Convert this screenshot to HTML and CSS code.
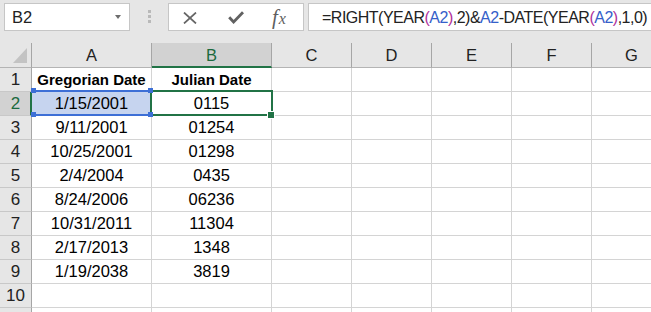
FILE: index.html
```html
<!DOCTYPE html>
<html>
<head>
<meta charset="utf-8">
<link rel="stylesheet" href="styles.css">
</head>
<body>
<div class="app">
  <div class="toolbar">
    <div class="namebox"><span class="name">B2</span><span class="caret"></span></div>
    <div class="grip"><i></i><i></i><i></i></div>
    <div class="fbtns">
      <svg class="ic-x" width="14" height="12" viewBox="0 0 14 12"><path d="M1 0.5 L13 11.5 M13 0.5 L1 11.5" stroke="#666" stroke-width="1.7" fill="none"/></svg>
      <svg class="ic-check" width="16" height="13" viewBox="0 0 16 13"><path d="M1.2 6.2 L5.6 11 L15 1.3" stroke="#616161" stroke-width="2.8" fill="none"/></svg>
      <span class="fx"><span class="fx-f">f</span><span class="fx-x">x</span></span>
    </div>
    <div class="formula">=RIGHT(YEAR<span class="p">(</span><span class="r">A2</span><span class="p">)</span>,2)&amp;<span class="r">A2</span>-DATE(YEAR<span class="p">(</span><span class="r">A2</span><span class="p">)</span>,1,0)</div>
  </div>
  <div class="sheet">
    <div class="grid">
      <div class="c corner"><svg width="31" height="24" viewBox="0 0 31 24"><polygon points="13,20 27,20 27,5" fill="#c3c3c3"/></svg></div>
      <div class="c ch">A</div><div class="c ch sel">B</div><div class="c ch">C</div><div class="c ch">D</div><div class="c ch">E</div><div class="c ch">F</div><div class="c ch">G</div>

      <div class="c rh">1</div><div class="c b">Gregorian Date</div><div class="c b">Julian Date</div><div class="c"></div><div class="c"></div><div class="c"></div><div class="c"></div><div class="c"></div>
      <div class="c rh sel">2</div><div class="c fill">1/15/2001</div><div class="c">0115</div><div class="c"></div><div class="c"></div><div class="c"></div><div class="c"></div><div class="c"></div>
      <div class="c rh">3</div><div class="c">9/11/2001</div><div class="c">01254</div><div class="c"></div><div class="c"></div><div class="c"></div><div class="c"></div><div class="c"></div>
      <div class="c rh">4</div><div class="c">10/25/2001</div><div class="c">01298</div><div class="c"></div><div class="c"></div><div class="c"></div><div class="c"></div><div class="c"></div>
      <div class="c rh">5</div><div class="c">2/4/2004</div><div class="c">0435</div><div class="c"></div><div class="c"></div><div class="c"></div><div class="c"></div><div class="c"></div>
      <div class="c rh">6</div><div class="c">8/24/2006</div><div class="c">06236</div><div class="c"></div><div class="c"></div><div class="c"></div><div class="c"></div><div class="c"></div>
      <div class="c rh">7</div><div class="c">10/31/2011</div><div class="c">11304</div><div class="c"></div><div class="c"></div><div class="c"></div><div class="c"></div><div class="c"></div>
      <div class="c rh">8</div><div class="c">2/17/2013</div><div class="c">1348</div><div class="c"></div><div class="c"></div><div class="c"></div><div class="c"></div><div class="c"></div>
      <div class="c rh">9</div><div class="c">1/19/2038</div><div class="c">3819</div><div class="c"></div><div class="c"></div><div class="c"></div><div class="c"></div><div class="c"></div>
      <div class="c rh">10</div><div class="c"></div><div class="c"></div><div class="c"></div><div class="c"></div><div class="c"></div><div class="c"></div><div class="c"></div>
      <div class="c rh"></div><div class="c"></div><div class="c"></div><div class="c"></div><div class="c"></div><div class="c"></div><div class="c"></div><div class="c"></div>
    </div>
    <div class="active-box"><span class="handle"></span></div>
    <div class="ref-box"><i class="sq tl"></i><i class="sq tr"></i><i class="sq bl"></i><i class="sq br"></i></div>
  </div>
</div>
</body>
</html>
```

FILE: styles.css
```css
html, body {
  margin: 0;
  padding: 0;
  background: #ffffff;
  overflow: hidden;
}
body {
  font-family: "Liberation Sans", Arial, sans-serif;
  color: #000;
}
.app {
  width: 651px;
  height: 312px;
  overflow: hidden;
}
.toolbar {
  display: flex;
  align-items: flex-start;
  height: 43px;
  box-sizing: border-box;
  padding: 3px 0 0 4px;
  background: #e6e6e6;
}
.namebox {
  width: 126px;
  height: 28px;
  box-sizing: border-box;
  border: 1px solid #c6c6c6;
  background: #fff;
  display: flex;
  align-items: center;
  padding-left: 7px;
}
.name {
  flex: 1;
  font-size: 16.5px;
  color: #222;
}
.caret {
  width: 0;
  height: 0;
  border-left: 3.5px solid transparent;
  border-right: 3.5px solid transparent;
  border-top: 4px solid #6d6d6d;
  margin-right: 8px;
}
.grip {
  width: 38px;
  display: flex;
  flex-direction: column;
  align-items: center;
  gap: 2px;
  padding-top: 7px;
}
.grip i {
  display: block;
  width: 3px;
  height: 3px;
  background: #b9b9b9;
}
.fbtns {
  width: 136px;
  height: 28px;
  box-sizing: border-box;
  border: 1px solid #c6c6c6;
  background: #fff;
  display: flex;
  align-items: center;
}
.ic-x { margin-left: 14px; margin-top: 1px; }
.ic-check { margin-left: 31px; margin-top: 1px; }
.fx {
  margin-left: 28px;
  font-family: "Liberation Serif", "Times New Roman", serif;
  font-style: italic;
  color: #5f5f5f;
  line-height: 1;
}
.fx-f { font-size: 21px; }
.fx-x { font-size: 16px; margin-left: 1px; }
.formula {
  flex: 1;
  margin-left: 4px;
  height: 28px;
  box-sizing: border-box;
  border: 1px solid #c6c6c6;
  border-right: none;
  background: #fff;
  padding-left: 13px;
  font-size: 16px;
  line-height: 27px;
  letter-spacing: -0.5px;
  white-space: nowrap;
  overflow: hidden;
  color: #222;
}
.formula .r { color: #3560c9; }
.formula .p { color: #b0319a; }

.sheet {
  position: relative;
  height: 269px;
  overflow: hidden;
}
.grid {
  display: grid;
  grid-template-columns: 32px 120px 120px repeat(5, 80px);
  grid-template-rows: 25px;
  grid-auto-rows: 24px;
  width: max-content;
}
.c {
  box-sizing: border-box;
  border-right: 1px solid #d4d4d4;
  border-bottom: 1px solid #d4d4d4;
  text-align: center;
  font-size: 16.5px;
  line-height: 23px;
  white-space: nowrap;
  overflow: hidden;
  color: #000;
}
.b {
  font-weight: bold;
  font-size: 15px;
}
.fill { background: #c6d4ef; }
.corner {
  background: #e6e6e6;
  border-right-color: #a6a6a6;
  border-bottom-color: #b4b4b4;
}
.corner svg { display: block; }
.ch {
  background: #e6e6e6;
  border-right-color: #a6a6a6;
  border-bottom-color: #b4b4b4;
  line-height: 25px;
  font-size: 16.5px;
  color: #222;
}
.ch.sel {
  background: #d2d2d2;
  border-bottom: 2px solid #217346;
  color: #1b6a3e;
  line-height: 24px;
}
.rh {
  background: #e6e6e6;
  border-right-color: #a6a6a6;
  border-bottom-color: #c8c8c8;
  font-size: 17px;
  color: #222;
}
.rh.sel {
  background: #d2d2d2;
  border-right: 2px solid #217346;
  color: #1b6a3e;
  padding-left: 1px;
}
.active-box {
  position: absolute;
  left: 150px;
  top: 47px;
  width: 123px;
  height: 26px;
  box-sizing: border-box;
  border: 2px solid #217346;
}
.handle {
  position: absolute;
  left: 115px;
  top: 19px;
  width: 6px;
  height: 6px;
  background: #217346;
  border: 1px solid #fff;
}
.ref-box {
  position: absolute;
  left: 32px;
  top: 47px;
  width: 117px;
  height: 26px;
  box-sizing: border-box;
  border-top: 2px solid #3d6fd6;
  border-bottom: 2px solid #3d6fd6;
}
.sq {
  position: absolute;
  width: 5px;
  height: 5px;
  background: #3d6fd6;
}
.sq.tl { left: -1px; top: -4px; }
.sq.tr { left: 116px; top: -4px; }
.sq.bl { left: -1px; top: 20px; }
.sq.br { left: 116px; top: 20px; }
```
